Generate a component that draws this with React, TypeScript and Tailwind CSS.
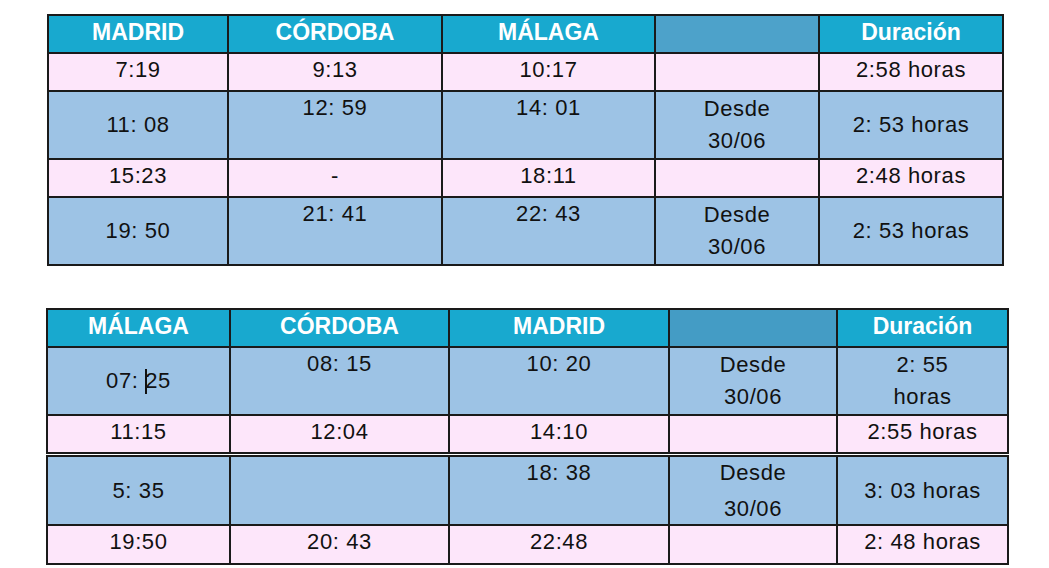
import React from "react";

type Cell = {
  t?: React.ReactNode;
  v?: "top" | "center";
  lh?: string;
};

const PINK = "bg-[#fde6fa]";
const BLUE = "bg-[#9dc3e5]";

function Row({ cells, bg }: { cells: Cell[]; bg: string }) {
  return (
    <>
      {cells.map((c, i) => (
        <div
          key={i}
          className={`${bg} flex justify-center text-center text-[22px] tracking-[0.6px] text-[#111111] ${
            c.v === "center" ? "items-center" : "items-start"
          } ${c.lh ?? "leading-[32px]"}`}
        >
          <div>{c.t}</div>
        </div>
      ))}
    </>
  );
}

function Header({ names, empty }: { names: string[]; empty: string }) {
  return (
    <>
      {names.map((n, i) => (
        <div
          key={i}
          className={`${
            n === "" ? empty : "bg-[#18a9cf]"
          } flex items-start justify-center text-[23px] font-bold leading-[32px] text-white`}
        >
          {n}
        </div>
      ))}
    </>
  );
}

export default function App() {
  const font = { fontFamily: '"Liberation Sans", Arial, sans-serif' };
  return (
    <div className="min-h-[568px] w-[1049px] bg-white pt-[14px] pl-[47px]" style={font}>
      {/* Table 1 */}
      <div className="grid w-fit grid-cols-[178px_212px_211px_162px_182px] grid-rows-[36px_36px_66px_36px_66px] gap-[2px] border-2 border-[#1a1a1a] bg-[#1a1a1a]">
        <Header names={["MADRID", "CÓRDOBA", "MÁLAGA", "", "Duración"]} empty="bg-[#4da2ca]" />
        <Row bg={PINK} cells={[{ t: "7:19" }, { t: "9:13" }, { t: "10:17" }, {}, { t: "2:58 horas" }]} />
        <Row
          bg={BLUE}
          cells={[
            { t: "11: 08", v: "center" },
            { t: "12: 59" },
            { t: "14: 01" },
            { t: (<>Desde<br />30/06</>), v: "center" },
            { t: "2: 53 horas", v: "center" },
          ]}
        />
        <Row bg={PINK} cells={[{ t: "15:23" }, { t: "-" }, { t: "18:11" }, {}, { t: "2:48 horas" }]} />
        <Row
          bg={BLUE}
          cells={[
            { t: "19: 50", v: "center" },
            { t: "21: 41" },
            { t: "22: 43" },
            { t: (<>Desde<br />30/06</>), v: "center" },
            { t: "2: 53 horas", v: "center" },
          ]}
        />
      </div>

      {/* Table 2 */}
      <div className="mt-[42px] -ml-[1px] flex w-fit flex-col gap-[1px]">
        <div className="grid w-fit grid-cols-[181px_217px_218px_166px_169px] grid-rows-[36px_66px_36px] gap-[2px] border-2 border-[#1a1a1a] bg-[#1a1a1a]">
          <Header names={["MÁLAGA", "CÓRDOBA", "MADRID", "", "Duración"]} empty="bg-[#449cc5]" />
          <Row
            bg={BLUE}
            cells={[
              {
                t: (
                  <>
                    07:{" "}
                    <span className="relative -top-[1px] mr-[-2px] inline-block h-[25px] w-[2px] bg-[#111111] align-middle" />
                    25
                  </>
                ),
                v: "center",
              },
              { t: "08: 15" },
              { t: "10: 20" },
              { t: (<>Desde<br />30/06</>), v: "center" },
              { t: (<>2: 55<br />horas</>), v: "center" },
            ]}
          />
          <Row bg={PINK} cells={[{ t: "11:15" }, { t: "12:04" }, { t: "14:10" }, {}, { t: "2:55 horas" }]} />
        </div>
        <div className="grid w-fit grid-cols-[181px_217px_218px_166px_169px] grid-rows-[67px_37px] gap-[2px] border-2 border-[#1a1a1a] bg-[#1a1a1a]">
          <Row
            bg={BLUE}
            cells={[
              { t: "5: 35", v: "center" },
              {},
              { t: "18: 38" },
              { t: (<>Desde<br />30/06</>), v: "center", lh: "leading-[36px]" },
              { t: "3: 03 horas", v: "center" },
            ]}
          />
          <Row bg={PINK} cells={[{ t: "19:50" }, { t: "20: 43" }, { t: "22:48" }, {}, { t: "2: 48 horas" }]} />
        </div>
      </div>
    </div>
  );
}
